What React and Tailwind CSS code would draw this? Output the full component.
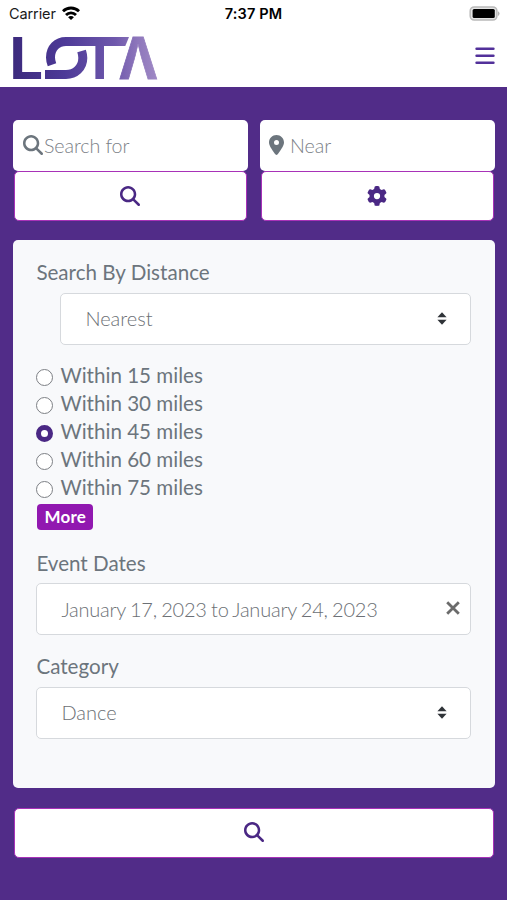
import React, { useState } from "react";
import { FaMagnifyingGlass, FaGear, FaLocationDot } from "react-icons/fa6";

const DISTANCES = [15, 30, 45, 60, 75];

const StatusBar = () => (
  <div className="grid h-7 grid-cols-3 items-center pl-[9px] pr-[7px] font-['Inter',sans-serif] text-[14.5px] leading-none text-[#1a1a1a]">
    <div className="flex items-center gap-[6px]">
      <span className="tracking-[-0.1px]">Carrier</span>
      <svg width="18" height="14" viewBox="0 0 18 14" fill="none" stroke="#000" strokeWidth="2.8" className="-mt-[2px]">
        <path d="M1 5.3a11.3 11.3 0 0 1 16 0" />
        <path d="M4 8.9a7 7 0 0 1 10 0" />
        <path d="M9 14 6.1 11.3a3.9 3.9 0 0 1 5.8 0z" fill="#000" stroke="none" />
      </svg>
    </div>
    <span className="-ml-[2px] text-center font-semibold tracking-[0.15px] text-black">7:37 PM</span>
    <svg className="-mt-[2px] justify-self-end" width="31" height="15" viewBox="0 0 31 15">
      <rect x="1.2" y="0.9" width="26.7" height="13.2" rx="4" fill="#e4e4e4" stroke="#b9b9b9" strokeWidth="1.5" />
      <rect x="3.6" y="3" width="22.2" height="9" rx="1.5" fill="#000" />
      <path d="M29 5.3a2.5 2.5 0 0 1 0 4.6z" fill="#b5b5b5" />
    </svg>
  </div>
);

const Logo = () => (
  <svg
    width="146"
    height="44"
    viewBox="0 0 146 44"
    role="img"
    aria-label="LOTA"
    fontFamily="Inter, sans-serif"
    fontWeight="700"
    fontSize="57.5"
    className="overflow-visible"
  >
    <defs>
      <linearGradient id="brand" gradientUnits="userSpaceOnUse" x1="0" y1="0" x2="146" y2="0">
        <stop offset="0" stopColor="#3c2a7d" />
        <stop offset="0.35" stopColor="#4d3a97" />
        <stop offset="0.7" stopColor="#6f58ac" />
        <stop offset="0.85" stopColor="#8d76bb" />
        <stop offset="1" stopColor="#a18bc6" />
      </linearGradient>
    </defs>
    <g fill="url(#brand)">
      <text x="-3.7" y="43" textLength="34" lengthAdjust="spacingAndGlyphs">L</text>
      <text x="67.5" y="43">T</text>
      <text x="105.4" y="42.7" textLength="39.6" lengthAdjust="spacingAndGlyphs" stroke="url(#brand)" strokeWidth="0.8">Λ</text>
      {/* slanted end of the long bar */}
      <path d="M90 1H116L112.3 10H90z" />
    </g>
    {/* swoosh */}
    <g fill="none" stroke="url(#brand)" strokeWidth="9">
      <path d="M39 28.7C38 26 37.5 23.5 37.5 21.5C37.5 12 44 5.5 53 5.5H91" />
      <path d="M68.6 15C69.4 17.5 69.8 20 69.8 22C69.8 32 62 38.5 53 38.5H32" />
    </g>
  </svg>
);

const SortCaret = () => (
  <svg width="10" height="13" viewBox="0 0 10 13" fill="#2f3338" className="-mr-px">
    <path d="M5 0.2 9.6 5.2H0.4z" />
    <path d="M5 12.8 9.6 7.8H0.4z" />
  </svg>
);

const SelectBox = ({ value, className = "" }) => (
  <div
    className={`flex h-[52px] items-center justify-between rounded-[5px] border border-[#d6d9dd] bg-white px-6 text-[20px] font-light text-[#6c7075] ${className}`}
  >
    <span className="-mt-[2px]">{value}</span>
    <SortCaret />
  </div>
);

const ActionButton = ({ children }) => (
  <button className="mx-px flex h-[50px] items-center justify-center rounded-[5px] border border-[#a832b8] bg-white text-[#4a2884]">
    {children}
  </button>
);

const App = () => {
  const [distance, setDistance] = useState(45);

  return (
    <div className="flex h-[900px] w-[507px] flex-col overflow-hidden bg-[#512c88] font-['Lato',sans-serif]">
      <header className="h-[87px] bg-white">
        <StatusBar />
        <div className="flex items-center justify-between pl-[13px] pr-3 pt-2">
          <Logo />
          <svg width="20" height="18" viewBox="0 0 20 18" stroke="#52309a" strokeWidth="2.6" strokeLinecap="round" className="-mt-1">
            <path d="M1.6 1.8H18.4M1.6 8.8H18.4M1.6 15.8H18.4" />
          </svg>
        </div>
      </header>

      <main className="flex flex-col pl-[13px] pr-3 pt-[33px]">
        {/* Search fields */}
        <div className="grid grid-cols-2 gap-x-3">
          <div className="flex flex-col">
            <div className="flex h-[51px] items-center rounded-[5px] bg-white pl-[10px] text-[19.7px] font-light text-[#7c8187]">
              <FaMagnifyingGlass className="-mt-[2px] size-5 text-[#6c757d]" />
              <span className="ml-px tracking-[-0.1px]">Search for</span>
            </div>
            <ActionButton>
              <FaMagnifyingGlass className="-ml-px size-5" />
            </ActionButton>
          </div>
          <div className="flex flex-col">
            <div className="flex h-[51px] items-center rounded-[5px] bg-white pl-[9px] text-[19.7px] font-light text-[#7c8187]">
              <FaLocationDot className="-mt-[2px] h-5 w-[15px] text-[#6c757d]" />
              <span className="ml-[6px]">Near</span>
            </div>
            <ActionButton>
              <FaGear className="-ml-px size-5" />
            </ActionButton>
          </div>
        </div>

        {/* Filters */}
        <section className="mt-[19px] h-[548px] rounded-[5px] bg-[#f8f9fb] pl-[23.4px] pr-6 pt-[18px] text-[20.6px] text-[#6c757d]">
          <h2 className="h-[34.5px] leading-7">Search By Distance</h2>
          <SelectBox value="Nearest" className="ml-6" />
          <div className="mt-[16px] flex flex-col">
            {DISTANCES.map((miles) => (
              <label key={miles} className="flex h-[28.1px] items-center gap-[7px]">
                <input
                  type="radio"
                  name="distance"
                  checked={distance === miles}
                  onChange={() => setDistance(miles)}
                  className="mt-[6px] size-[17px] shrink-0 appearance-none rounded-full border-[1.5px] border-[#7d8085] bg-white checked:border-[5px] checked:border-[#4a2884]"
                />
                <span className="mt-px">Within {miles} miles</span>
              </label>
            ))}
          </div>
          <button className="ml-px mt-[3px] flex h-[26px] w-[56px] items-center justify-center rounded bg-[#9118b0] text-[17px] font-bold tracking-[0.2px] text-white">
            More
          </button>
          <h2 className="mt-[19px] h-[34.5px] leading-7">Event Dates</h2>
          <div className="flex h-[52px] items-center justify-between rounded-[5px] border border-[#d6d9dd] bg-white pl-6 pr-[10px] text-[20px] font-light text-[#6c7075]">
            <span className="-mt-px tracking-[-0.22px] [word-spacing:-0.9px]">January 17, 2023 to January 24, 2023</span>
            <svg width="14" height="14" viewBox="0 0 14 14" stroke="#6b6b6b" strokeWidth="2.8" className="-mt-[2px]">
              <path d="M1.2 1.2 12.8 12.8M12.8 1.2 1.2 12.8" />
            </svg>
          </div>
          <h2 className="mt-[17px] h-[34.5px] leading-7">Category</h2>
          <SelectBox value="Dance" />
        </section>

        <div className="mt-[20px] flex flex-col">
          <ActionButton>
            <FaMagnifyingGlass className="-mt-[2px] size-5" />
          </ActionButton>
        </div>
      </main>
    </div>
  );
};

export default App;
